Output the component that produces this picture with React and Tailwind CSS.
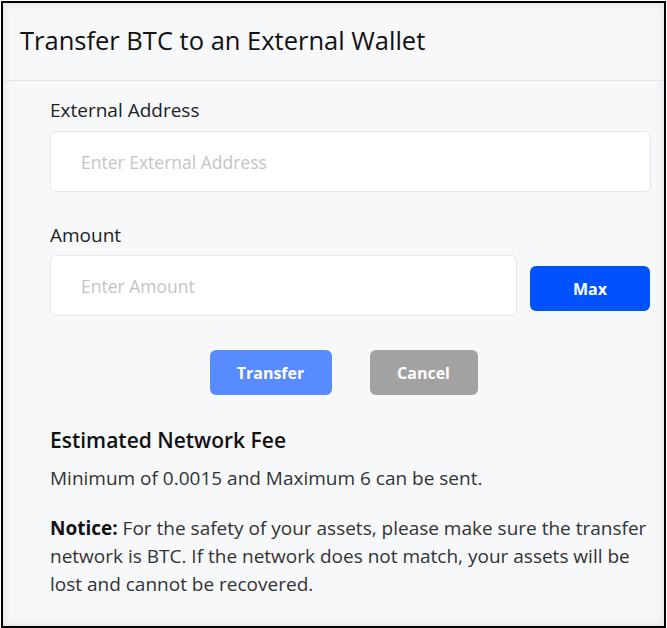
import React from "react";

const font = { fontFamily: '"Open Sans", "Noto Sans", sans-serif' };

export default function App() {
  return (
    <div className="bg-white w-[667px] h-[628px]" style={font}>
      <div className="ml-px mt-px w-[665px] h-[627px] border-2 border-black bg-[#f7f8fa] shadow-[inset_0_0_10px_rgba(0,0,0,0.10)] flex flex-col">
        {/* header */}
        <div className="h-[78px] shrink-0 flex items-center pl-[17px] pb-[4px] border-b border-[#e3e6eb]">
          <h2 className="text-[25.5px] leading-[32px] text-[#111]">Transfer BTC to an External Wallet</h2>
        </div>

        <div className="pl-[47px] pr-[13px] pt-[17px]">
          <label className="block text-[19px] leading-[24px] text-[#222]">External Address</label>
          <input
            className="mt-[9px] block w-full h-[61px] rounded-md border border-[#e5e7eb] bg-white pl-[30px] text-[17.5px] placeholder:text-[#c4c4c4] outline-none"
            placeholder="Enter External Address"
          />

          <label className="mt-[31px] block text-[19px] leading-[24px] text-[#222]">Amount</label>
          <div className="mt-[8px] flex items-start gap-[13px]">
            <input
              className="block w-[467px] h-[61px] rounded-md border border-[#e5e7eb] bg-white pl-[30px] text-[17.5px] placeholder:text-[#c4c4c4] outline-none"
              placeholder="Enter Amount"
            />
            <button className="mt-[11px] w-[120px] h-[45px] rounded-md bg-[#0052ff] text-white text-[16px] font-bold">Max</button>
          </div>

          <div className="mt-[34px] flex justify-center gap-[38px] pr-[14px]">
            <button className="w-[122px] h-[45px] rounded-md bg-[#578bff] text-white text-[16px] font-bold">Transfer</button>
            <button className="w-[108px] h-[45px] rounded-md bg-[#a2a2a2] text-white text-[16px] font-bold">Cancel</button>
          </div>

          <h3 className="mt-[31px] text-[21px] leading-[28px] font-semibold text-[#111]">Estimated Network Fee</h3>
          <p className="mt-[10px] text-[19px] leading-[28px] text-[#333]">Minimum of 0.0015 and Maximum 6 can be sent.</p>
          <p className="mt-[22px] text-[19px] leading-[28px] text-[#333]">
            <span className="font-bold text-[#111]">Notice:</span> For the safety of your assets, please make sure the transfer network is BTC. If the network does not match, your assets will be lost and cannot be recovered.
          </p>
        </div>
      </div>
    </div>
  );
}
